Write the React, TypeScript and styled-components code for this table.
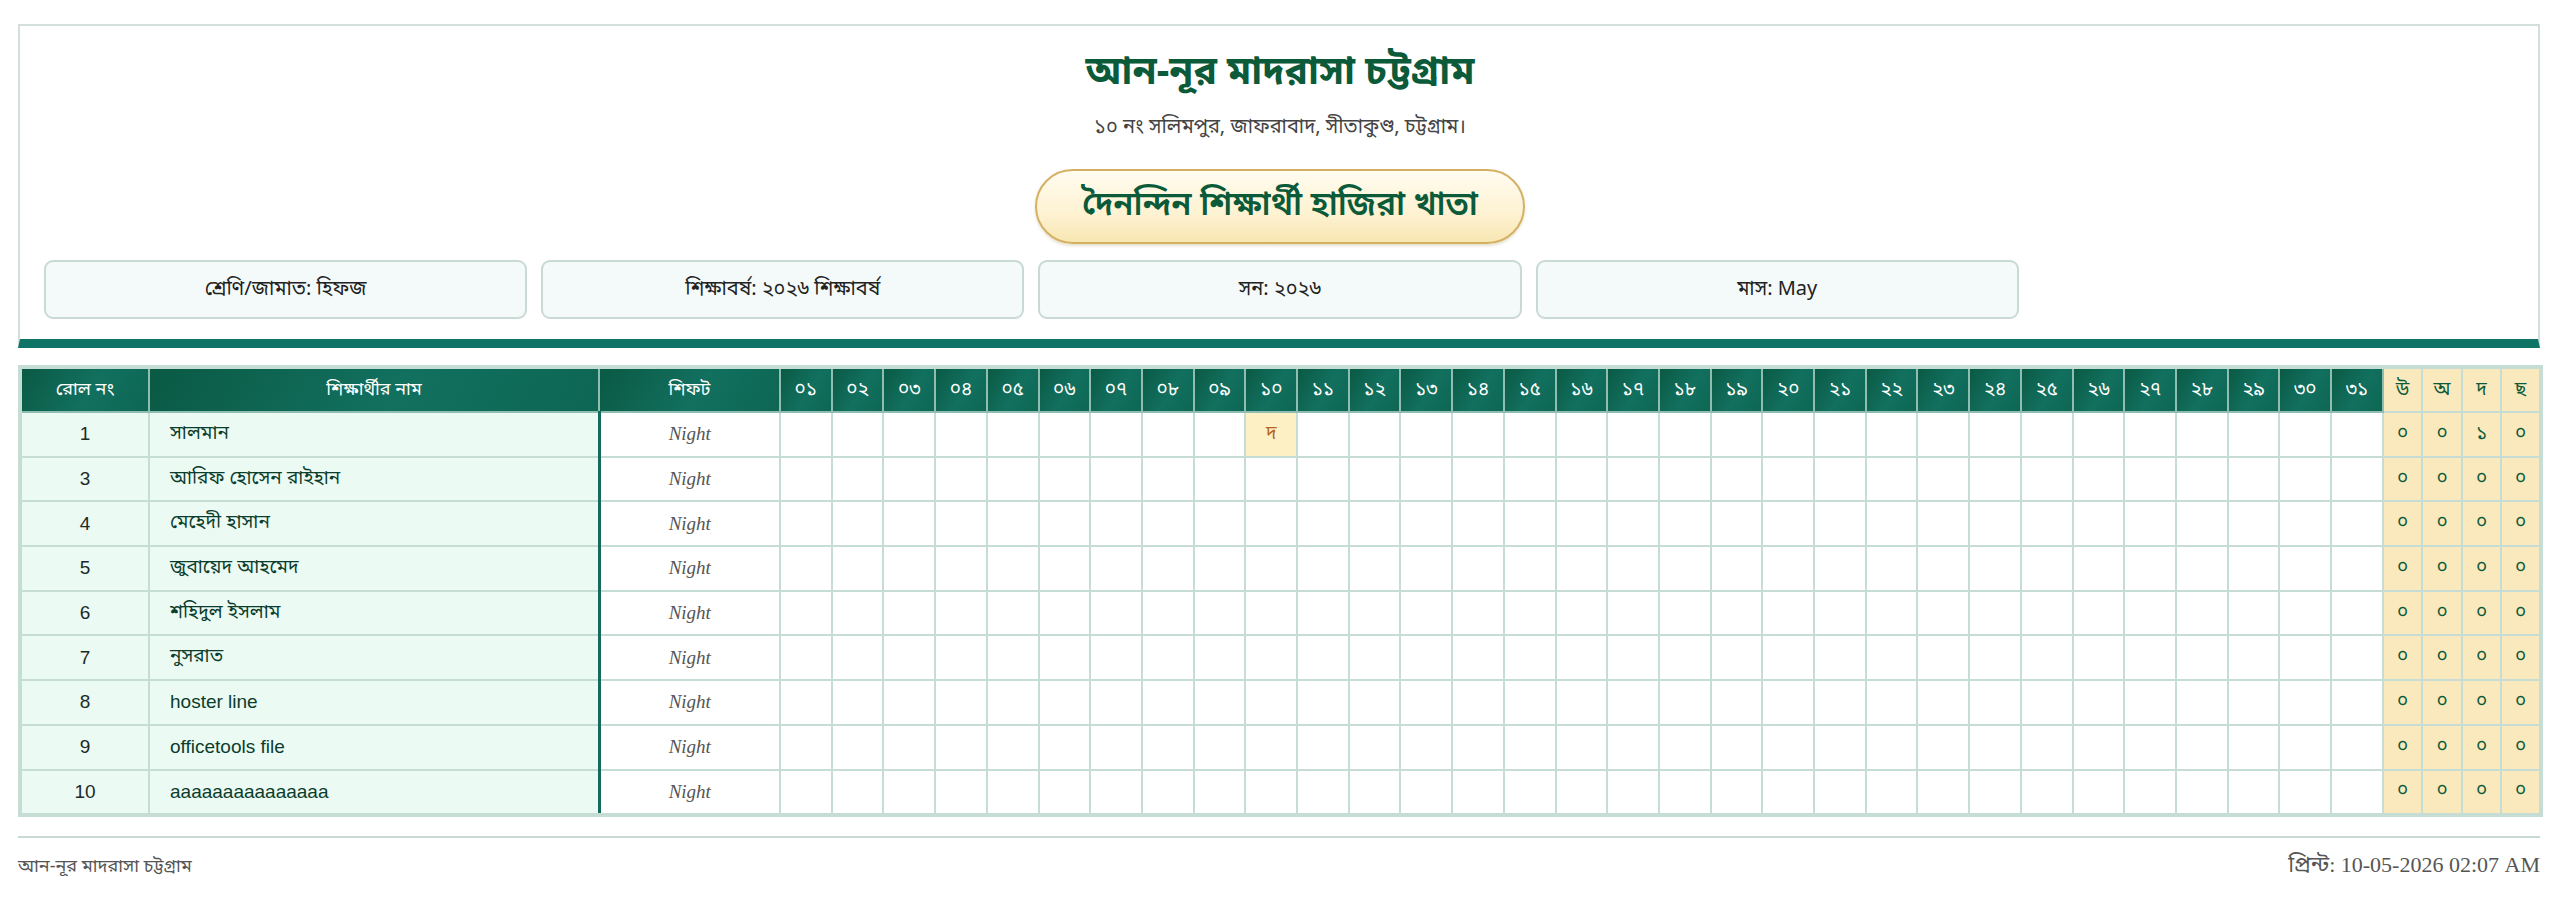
import React from "react";
import styled, { createGlobalStyle } from "styled-components";

const BN = `"Noto Sans Bengali", "Noto Serif Bengali", "Lohit Bengali", "FreeSans", "Liberation Sans", sans-serif`;

const Global = createGlobalStyle`
  html, body { margin: 0; padding: 0; background: #ffffff; }
  body { font-family: ${BN}; color: #222; }
`;

const Page = styled.div`
  padding: 24px 20px 0 18px;
`;

const HeaderCard = styled.header`
  border: 2px solid #d3dfdb;
  border-bottom: 9px solid #0f7366;
  padding: 22px 22px 20px 24px;
  display: flex;
  flex-direction: column;
  align-items: center;
`;

const Title = styled.h1`
  margin: 0;
  font-size: 39px;
  font-weight: 700;
  color: #0b5a3a;
  line-height: 52px;
`;

const Address = styled.div`
  margin-top: 15px;
  font-size: 20px;
  color: #444;
  line-height: 26px;
`;

const Pill = styled.div`
  margin-top: 28px;
  width: 490px;
  height: 75px;
  box-sizing: border-box;
  border: 2px solid #d4b063;
  border-radius: 40px;
  background: linear-gradient(180deg, #fffcf0 0%, #fdf2d2 60%, #f8e6b2 100%);
  box-shadow: 0 2px 3px rgba(160, 130, 60, 0.25);
  display: flex;
  align-items: center;
  justify-content: center;
  font-size: 33px;
  font-weight: 600;
  color: #0b5a3a;
`;

const InfoGrid = styled.div`
  align-self: stretch;
  margin-top: 16px;
  display: grid;
  grid-template-columns: repeat(5, 1fr);
  gap: 14px;
`;

const InfoBox = styled.div`
  height: 59px;
  box-sizing: border-box;
  border: 2px solid #c9d9d4;
  border-radius: 9px;
  background: #f4faf9;
  display: flex;
  align-items: center;
  justify-content: center;
  font-size: 20px;
  color: #222;
`;

const Table = styled.table`
  margin-top: 17px;
  width: 100%;
  table-layout: fixed;
  border-collapse: collapse;
  border: 4px solid #c6ddd5;
`;

const Th = styled.th<{ $summary?: boolean; $day?: boolean }>`
  height: 42px;
  padding: 0;
  font-weight: 400;
  font-size: ${(p) => (p.$day || p.$summary ? "19px" : "18px")};
  border: 2px solid ${(p) => (p.$summary ? "#c6ddd5" : "#8fbdb1")};
  color: ${(p) => (p.$summary ? "#0b5a3a" : "#ffffff")};
  background: ${(p) =>
    p.$summary
      ? "#f9e9bd"
      : "linear-gradient(120deg, #0a5a44 0%, #12705f 55%, #0d6653 100%)"};
`;

const Td = styled.td<{ $kind?: "roll" | "name" | "shift" | "day" | "mark" | "sum" }>`
  height: 42.7px;
  padding: 0;
  border: 2px solid #c6ddd5;
  text-align: center;
  font-size: 18px;
  ${(p) => {
    switch (p.$kind) {
      case "roll":
        return `background: #ecfaf4; font-family: "Liberation Sans", ${BN}; color: #1e2a25; font-size: 19px;`;
      case "name":
        return `background: #ecfaf4; text-align: left; padding-left: 20px; color: #0b3d2c; font-family: "Liberation Sans", ${BN}; font-size: 19px; border-right: 3px solid #166a5c;`;
      case "shift":
        return `background: #fff; font-family: "Liberation Serif", serif; font-style: italic; color: #555; font-size: 19px;`;
      case "mark":
        return `background: #fdf0c4; color: #b8621b; font-size: 19px;`;
      case "sum":
        return `background: #f9e9bd; color: #0b5a3a; font-size: 19px;`;
      default:
        return `background: #fff;`;
    }
  }}
`;

const FooterLine = styled.hr`
  margin: 19px 0 0;
  border: none;
  border-top: 2px solid #c9d9d4;
`;

const Footer = styled.footer`
  display: flex;
  justify-content: space-between;
  align-items: center;
  padding-top: 14px;
`;

const FootLeft = styled.span`
  font-size: 18px;
  color: #555;
`;

const FootRight = styled.span`
  font-family: "Liberation Serif", ${BN}, serif;
  font-size: 22px;
  color: #555;
`;

const bnDigits = "০১২৩৪৫৬৭৮৯";
const toBn = (s: string) => s.replace(/[0-9]/g, (d) => bnDigits[Number(d)]);

const students = [
  { roll: "1", name: "সালমান" },
  { roll: "3", name: "আরিফ হোসেন রাইহান" },
  { roll: "4", name: "মেহেদী হাসান" },
  { roll: "5", name: "জুবায়েদ আহমেদ" },
  { roll: "6", name: "শহিদুল ইসলাম" },
  { roll: "7", name: "নুসরাত" },
  { roll: "8", name: "hoster line" },
  { roll: "9", name: "officetools file" },
  { roll: "10", name: "aaaaaaaaaaaaaaa" },
];

const days = Array.from({ length: 31 }, (_, i) => i + 1);
const dayW = 1603 / 31;

export default function App() {
  return (
    <>
      <Global />
      <Page>
        <HeaderCard>
          <Title>আন-নূর মাদরাসা চট্টগ্রাম</Title>
          <Address>১০ নং সলিমপুর, জাফরাবাদ, সীতাকুণ্ড, চট্টগ্রাম।</Address>
          <Pill>দৈনন্দিন শিক্ষার্থী হাজিরা খাতা</Pill>
          <InfoGrid>
            <InfoBox>শ্রেণি/জামাত: হিফজ</InfoBox>
            <InfoBox>শিক্ষাবর্ষ: ২০২৬ শিক্ষাবর্ষ</InfoBox>
            <InfoBox>সন: ২০২৬</InfoBox>
            <InfoBox>মাস: May</InfoBox>
          </InfoGrid>
        </HeaderCard>

        <Table>
          <colgroup>
            <col style={{ width: 129 }} />
            <col style={{ width: 450 }} />
            <col style={{ width: 181 }} />
            {days.map((d) => (
              <col key={d} style={{ width: dayW }} />
            ))}
            {[0, 1, 2, 3].map((i) => (
              <col key={"s" + i} style={{ width: 39.5 }} />
            ))}
          </colgroup>
          <thead>
            <tr>
              <Th>রোল নং</Th>
              <Th>শিক্ষার্থীর নাম</Th>
              <Th>শিফট</Th>
              {days.map((d) => (
                <Th key={d} $day>
                  {toBn(String(d).padStart(2, "0"))}
                </Th>
              ))}
              {["উ", "অ", "দ", "ছ"].map((h) => (
                <Th key={h} $summary>
                  {h}
                </Th>
              ))}
            </tr>
          </thead>
          <tbody>
            {students.map((s, idx) => (
              <tr key={s.roll}>
                <Td $kind="roll">{s.roll}</Td>
                <Td $kind="name">{s.name}</Td>
                <Td $kind="shift">Night</Td>
                {days.map((d) =>
                  idx === 0 && d === 10 ? (
                    <Td key={d} $kind="mark">
                      দ
                    </Td>
                  ) : (
                    <Td key={d} $kind="day" />
                  )
                )}
                {(idx === 0 ? ["০", "০", "১", "০"] : ["০", "০", "০", "০"]).map((v, i) => (
                  <Td key={"s" + i} $kind="sum">
                    {v}
                  </Td>
                ))}
              </tr>
            ))}
          </tbody>
        </Table>

        <FooterLine />
        <Footer>
          <FootLeft>আন-নূর মাদরাসা চট্টগ্রাম</FootLeft>
          <FootRight>প্রিন্ট: 10-05-2026 02:07 AM</FootRight>
        </Footer>
      </Page>
    </>
  );
}
